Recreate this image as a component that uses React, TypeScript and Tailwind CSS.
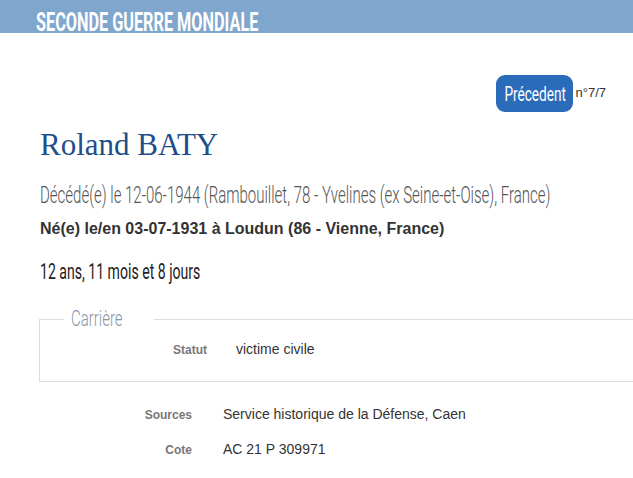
const cond = "inline-block whitespace-nowrap font-['Roboto'] origin-left";

export default function App() {
  return (
    <div className="w-[633px] h-[478px] overflow-hidden bg-white font-['Liberation_Sans']">
      {/* bandeau */}
      <div className="h-[33px] bg-[#7fa7cd] overflow-hidden pl-[36px] flex items-end">
        <span className={`${cond} scale-x-[0.65] font-bold text-[25px] leading-[20px] text-white`}>
          SECONDE GUERRE MONDIALE
        </span>
      </div>

      {/* navigation */}
      <div className="flex justify-end items-center pr-[27px] mt-[42px]">
        <div className="w-[77px] h-[37px] rounded-[9px] bg-[#2a6cb9] flex items-center justify-center overflow-hidden">
          <span className="inline-block whitespace-nowrap font-['Roboto'] text-[20px] text-white scale-x-[0.68]">Précedent</span>
        </div>
        <span className="ml-[2px] text-[13px] text-[#333] -mt-[1px]">n°7/7</span>
      </div>

      {/* identité */}
      <div className="pl-[40px]">
        <h1 className="mt-[15px] font-['Liberation_Serif'] text-[31px] leading-[36px] text-[#1f4e8a]">Roland BATY</h1>
        <div className="mt-[18px] h-[28px]">
          <span className={`${cond} scale-x-[0.625] font-light text-[24px] leading-[28px] text-[#555]`}>
            Décédé(e) le 12-06-1944 (Rambouillet, 78 - Yvelines (ex Seine-et-Oise), France)
          </span>
        </div>
        <p className="mt-[10px] text-[16px] leading-[20px] font-bold text-[#333]">
          Né(e) le/en 03-07-1931 à Loudun (86 - Vienne, France)
        </p>
        <div className="mt-[20px] h-[26px]">
          <span className={`${cond} scale-x-[0.64] text-[22px] leading-[26px] text-[#222]`}>
            12 ans, 11 mois et 8 jours
          </span>
        </div>
      </div>

      {/* carrière */}
      <fieldset className="ml-[39px] mt-[22px] w-[640px] border border-[#ddd] pb-[21px] pl-[24px]">
        <legend className="px-[7px] h-[24px]">
          <span className={`${cond} scale-x-[0.68] font-light text-[22px] leading-[24px] text-[#8897a6]`}>Carrière</span>
        </legend>
        <div className="grid grid-cols-[143px_1fr] gap-x-[29px] mt-[8px] items-baseline">
          <span className="text-right text-[12px] font-bold text-[#777]">Statut</span>
          <span className="text-[14px] text-[#333]">victime civile</span>
        </div>
      </fieldset>

      {/* sources */}
      <div className="grid grid-cols-[192px_1fr] gap-x-[31px] gap-y-[14px] mt-[22px] items-baseline">
        <span className="text-right text-[12px] font-bold text-[#777]">Sources</span>
        <span className="text-[14px] text-[#333]">Service historique de la Défense, Caen</span>
        <span className="text-right text-[12px] font-bold text-[#777]">Cote</span>
        <span className="text-[14px] text-[#333]">AC 21 P 309971</span>
      </div>
    </div>
  );
}
